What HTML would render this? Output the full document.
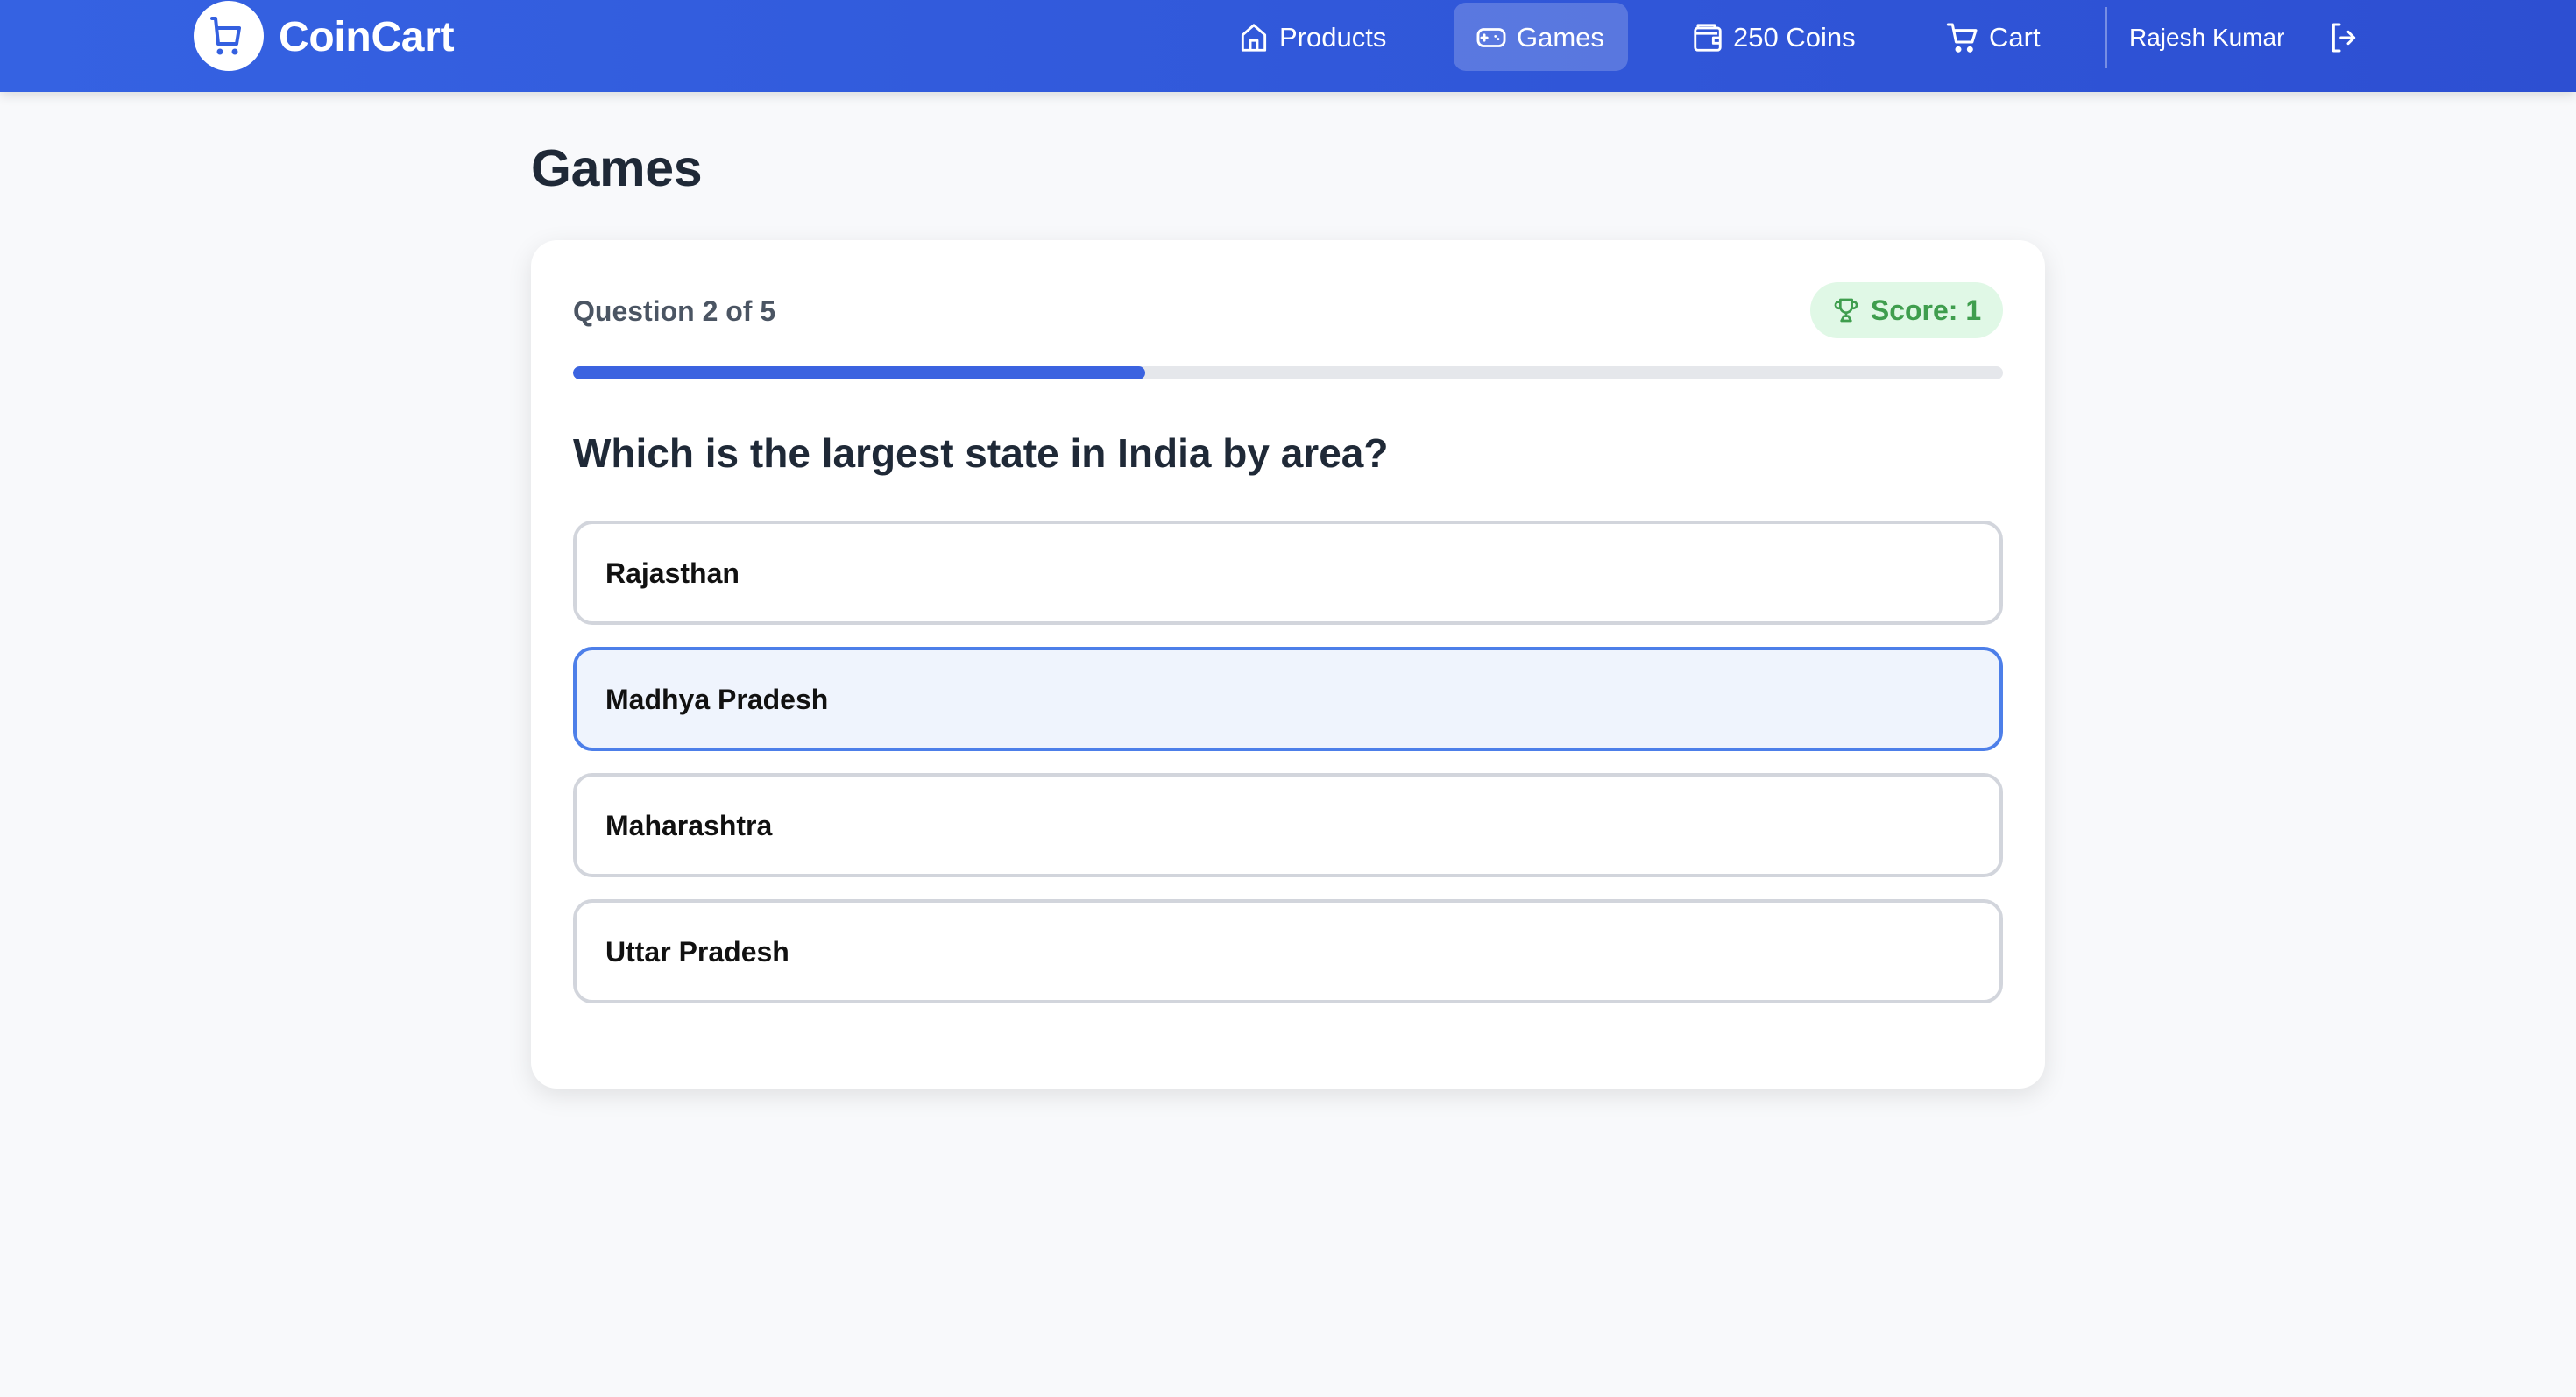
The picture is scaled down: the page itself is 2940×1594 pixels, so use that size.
<!DOCTYPE html>
<html><head><meta charset="utf-8">
<style>
*{box-sizing:border-box;margin:0;padding:0}
html,body{width:2940px;height:1594px;background:#f8f9fb;font-family:"Liberation Sans",sans-serif;overflow:hidden}
.hdr{position:absolute;left:0;top:0;width:2940px;height:105px;background:linear-gradient(90deg,#3562e2,#2d4fd2);box-shadow:0 4px 12px rgba(0,0,0,.12)}
.logo{position:absolute;left:221px;top:1px;width:80px;height:80px;border-radius:50%;background:#fff}
.brand{position:absolute;left:318px;top:15px;font-size:48px;font-weight:bold;color:#fff;letter-spacing:-0.3px}
.nav{position:absolute;top:1px;height:84px;display:flex;align-items:center;color:#fff;font-size:31px}
.nav svg{margin-right:10px}
.games{position:absolute;left:1659px;top:3px;width:199px;height:78px;border-radius:14px;background:rgba(255,255,255,.2)}
.div{position:absolute;left:2403px;top:8px;width:2px;height:70px;background:rgba(255,255,255,.35)}
h1{position:absolute;left:606px;top:158px;font-size:59px;font-weight:bold;color:#1f2937;letter-spacing:-0.3px}
.card{position:absolute;left:606px;top:274px;width:1728px;height:968px;background:#fff;border-radius:30px;box-shadow:0 8px 28px rgba(0,0,0,.1)}
.qn{position:absolute;left:48px;top:63px;font-size:32px;font-weight:bold;color:#4b5563}
.badge{position:absolute;left:1460px;top:48px;width:220px;height:64px;border-radius:32px;background:#e0f8e6;color:#3f9e4e;font-size:32px;font-weight:bold;display:flex;align-items:center;justify-content:center}
.badge svg{margin-right:12px}
.bar{position:absolute;left:48px;top:144px;width:1632px;height:15px;border-radius:8px;background:#e5e7eb;overflow:hidden}
.bar div{width:653px;height:15px;background:#3b63e0;border-radius:8px}
.q{position:absolute;left:48px;top:216px;font-size:46px;font-weight:bold;color:#1f2937}
.opt{position:absolute;left:48px;width:1632px;height:119px;border:4px solid #d2d5dc;border-radius:22px;background:#fff;font-size:32px;font-weight:bold;color:#111;padding-left:33px;padding-top:2px;display:flex;align-items:center}
.sel{border-color:#4d7fe9;background:#eff4fd}
</style></head><body>
<div class="hdr">
  <div class="logo"><svg width="80" height="80" viewBox="0 0 80 80"><g fill="none" stroke="#3460e0" stroke-width="4" stroke-linecap="round" stroke-linejoin="round"><path d="M21 20h4l3 29h21l3-18H27"/></g><circle cx="30" cy="58" r="3.5" fill="#3460e0"/><circle cx="47" cy="58" r="3.5" fill="#3460e0"/></svg></div>
  <div class="brand">CoinCart</div>
  <div class="games"></div>
  <div class="nav" style="left:1412px"><svg width="38" height="38" viewBox="0 0 24 24" fill="none" stroke="#fff" stroke-width="1.8" stroke-linejoin="round"><path d="M4 10l8-7 8 7v11H4z"/><path d="M9.5 21v-7h5v7"/></svg>Products</div>
  <div class="nav" style="left:1683px"><svg width="38" height="38" viewBox="0 0 24 24" fill="none" stroke="#fff" stroke-width="1.8" stroke-linecap="round"><rect x="2.5" y="6" width="19" height="12" rx="4"/><path d="M7 10v4M5 12h4M15 11h.01M17 13h.01"/></svg>Games</div>
  <div class="nav" style="left:1930px"><svg width="38" height="38" viewBox="0 0 24 24" fill="none" stroke="#fff" stroke-width="1.8" stroke-linejoin="round"><rect x="3" y="5" width="18" height="16" rx="2"/><path d="M3 9h16M21 12h-5v4h5"/><path d="M5 5V3h12v2"/></svg>250 Coins</div>
  <div class="nav" style="left:2220px"><svg width="40" height="40" viewBox="0 0 24 24" fill="none" stroke="#fff" stroke-width="1.8" stroke-linecap="round" stroke-linejoin="round"><path d="M2 3h3l2.5 12h11L21 7H6"/><circle cx="9" cy="20" r="1.2" fill="#fff"/><circle cx="17" cy="20" r="1.2" fill="#fff"/></svg>Cart</div>
  <div class="div"></div>
  <div class="nav" style="left:2430px;font-size:28px">Rajesh Kumar</div>
  <div class="nav" style="left:2655px"><svg width="40" height="40" viewBox="0 0 24 24" fill="none" stroke="#fff" stroke-width="1.8" stroke-linecap="round" stroke-linejoin="round"><path d="M9 3H5v18h4M15 8l4 4-4 4M19 12H10"/></svg></div>
</div>
<h1>Games</h1>
<div class="card">
  <div class="qn">Question 2 of 5</div>
  <div class="badge"><svg width="32" height="32" viewBox="0 0 24 24" fill="none" stroke="#3f9e4e" stroke-width="2" stroke-linecap="round" stroke-linejoin="round"><path d="M7 3h10v6a5 5 0 0 1-10 0z"/><path d="M7 5H4.5a2.5 2.5 0 0 0 2.5 5M17 5h2.5a2.5 2.5 0 0 1-2.5 5"/><path d="M12 14v3M8 21h8l-2-4h-4z"/></svg>Score: 1</div>
  <div class="bar"><div></div></div>
  <div class="q">Which is the largest state in India by area?</div>
  <div class="opt" style="top:320px">Rajasthan</div>
  <div class="opt sel" style="top:464px">Madhya Pradesh</div>
  <div class="opt" style="top:608px">Maharashtra</div>
  <div class="opt" style="top:752px">Uttar Pradesh</div>
</div>
</body></html>
